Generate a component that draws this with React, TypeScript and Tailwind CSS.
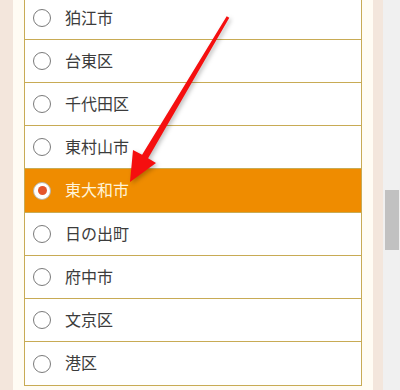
import React from "react";

interface Area {
  name: string;
  selected?: boolean;
}

const areas: Area[] = [
  { name: "狛江市" },
  { name: "台東区" },
  { name: "千代田区" },
  { name: "東村山市" },
  { name: "東大和市", selected: true },
  { name: "日の出町" },
  { name: "府中市" },
  { name: "文京区" },
  { name: "港区" },
];

function Radio({ checked }: { checked?: boolean }) {
  if (checked) {
    return (
      <span className="flex h-[18px] w-[18px] shrink-0 items-center justify-center rounded-full border border-[#b9b2a6] bg-white">
        <span className="h-[9px] w-[9px] rounded-full bg-[#e4552b]" />
      </span>
    );
  }
  return <span className="h-[18px] w-[18px] shrink-0 rounded-full border border-[#7a7a7a] bg-white" />;
}

function Arrow() {
  // red annotation arrow drawn over the list
  return (
    <svg
      className="pointer-events-none absolute left-0 top-0"
      width="400"
      height="390"
      viewBox="0 0 400 390"
      style={{ filter: "drop-shadow(2px 2px 2px rgba(0,0,0,0.25))" }}
    >
      <polygon
        points="226.7,16.2 229.3,17.8 148.1,158.3 156,163 130,182 133,150 142.1,154.7"
        fill="#f50f0f"
      />
    </svg>
  );
}

export default function App() {
  return (
    <div
      className="relative flex h-[390px] w-[400px] overflow-hidden"
      style={{ fontFamily: '"Noto Sans CJK JP", "Noto Sans", sans-serif' }}
    >
      <div className="w-[13px] shrink-0 bg-[#f3e6dc]" />
      <div className="flex-1 bg-[#fffcf4] px-[11px]">
        <ul className="-mt-[3px] border-x border-b border-[#c8ab55] bg-white">
          {areas.map((a) => (
            <li
              key={a.name}
              className={
                a.selected
                  ? "flex h-[44px] items-center gap-[14px] border-b border-[#c8ab55] bg-[#ef8c00] pl-[8px] text-[16px] text-[#fff4d8]"
                  : "flex h-[43px] items-center gap-[14px] border-b border-[#c8ab55] pl-[8px] text-[16px] text-[#3c3c3c] last:border-b-0"
              }
            >
              <Radio checked={a.selected} />
              <span className="pb-[3px]">{a.name}</span>
            </li>
          ))}
        </ul>
      </div>
      <div className="w-[10px] shrink-0 bg-[#f3e6dc]" />
      <div className="w-[17px] shrink-0 bg-[#f0f0f0] pl-[2px] pt-[190px]">
        <div className="h-[60px] w-[14px] bg-[#c1c1c1]" />
      </div>
      <Arrow />
    </div>
  );
}
